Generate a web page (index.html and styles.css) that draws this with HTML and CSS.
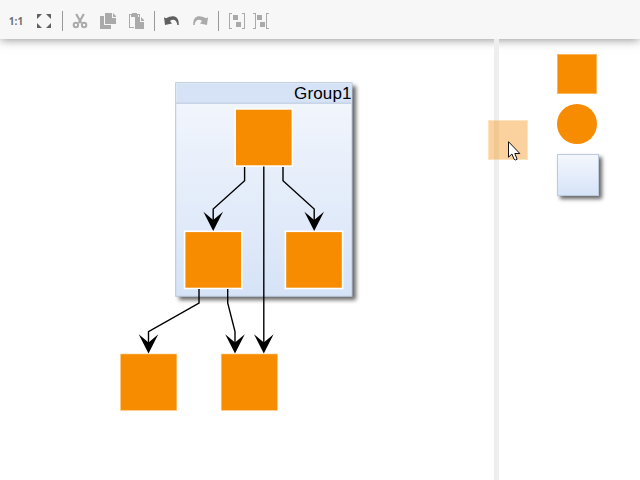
FILE: index.html
```html
<!DOCTYPE html>
<html lang="en">
<head>
<meta charset="utf-8">
<title>Graph Editor</title>
<link rel="stylesheet" href="styles.css">
</head>
<body>
<header class="toolbar">
  <span class="tool zoom-label">1:1</span>
  <svg class="tool dark" viewBox="0 0 16 16"><path d="M1 1h5L1 6zM10 1h5v5zM1 10l5 5H1zM15 10v5h-5z"/></svg>
  <span class="separator"></span>
  <svg class="tool" viewBox="0 0 16 16"><path d="M4.200 1l5 9M11.800 1L6.800 10" fill="none" stroke="#aaa" stroke-width="2.2"/><g fill="none" stroke="#aaa" stroke-width="2"><circle cx="3.900" cy="12" r="2.200"/><circle cx="12.100" cy="12" r="2.200"/></g></svg>
  <svg class="tool" viewBox="0 0 16 16"><path d="M0 3h4v9h7v4H0zM5 0h7v5h4v6H5zM13 0l3 3v1h-3z"/></svg>
  <svg class="tool" viewBox="0 0 16 16"><path d="M1 1h3V0h5v1h3v3h-1V2h-1v2H3V2H2v12h4v1H1zM7 4h5v5h4v7H7zM13 4l3 3v1h-3z"/></svg>
  <span class="separator"></span>
  <svg class="tool dark" viewBox="0 0 16 16"><path d="M0 4.300l2 1C6 3 10 2.500 12.500 4.500Q15 6.500 14.800 12L13.300 12Q13 7.500 9.500 6.800Q7.500 6.700 6 8l2 2.500L1 12z"/></svg>
  <svg class="tool" viewBox="0 0 16 16"><path d="M16 4.300l-2 1C10 3 6 2.500 3.500 4.500Q1 6.500 1.200 12L2.700 12Q3 7.500 6.500 6.800Q8.500 6.700 10 8l-2 2.500L15 12z"/></svg>
  <span class="separator"></span>
  <svg class="tool group-tool" viewBox="0 0 16 16"><path d="M0 0h3v1H1v14h2v1H0zM13 0h3v16h-3v-1h2V1h-2zM4 2h5v5H4zM7 9h5v5H7z"/></svg>
  <svg class="tool ungroup-tool" viewBox="0 0 16 16"><path d="M0 0h3v16H0v-1h2V1H0zM13 0h3v1h-2v14h2v1h-3zM4 2h5v5H4zM7 9h5v5H7z"/></svg>
</header>
<main class="workspace">
  <svg class="diagram" viewBox="0 39 494 441">
    <defs>
      <linearGradient id="body" x1="0" y1="0" x2="0" y2="1"><stop offset="0" stop-color="#f4f7fd"/><stop offset="1" stop-color="#d6e3f7"/></linearGradient>
      <filter id="shade" x="-10%" y="-10%" width="125%" height="125%"><feGaussianBlur stdDeviation="1.9"/></filter>
      <path id="arrow" d="M0 .5L-9.800 -18.800L0 -10.500L9.800 -18.800z"/>
    </defs>
    <rect x="179" y="86" width="177" height="214" fill="#000" opacity=".6" filter="url(#shade)"/>
    <rect x="175.700" y="82.700" width="176.300" height="213.600" fill="url(#body)" stroke="#b7c5da"/>
    <rect x="176.500" y="83.500" width="174.700" height="19.500" fill="#d6e3f7"/>
    <path d="M176 103.200h175.500" stroke="#b7c5da"/>
    <text class="group-title" x="351.500" y="99" text-anchor="end" textLength="57.500">Group1</text>
    <g class="nodes grouped">
      <rect x="235.200" y="108.900" width="57.200" height="57.200"/>
      <rect x="184.600" y="231.300" width="57.200" height="57.200"/>
      <rect x="285.400" y="231.300" width="57.200" height="57.200"/>
    </g>
    <g class="nodes">
      <rect x="120.500" y="354" width="56.300" height="56.300"/>
      <rect x="221.200" y="354" width="56.300" height="56.300"/>
    </g>
    <g class="edges">
      <path d="M244.600 167v13.800L213.200 209v12"/>
      <path d="M283 167v13.800L314.200 209v12"/>
      <path d="M263.800 166.500V344"/>
      <path d="M199 289v14L148.500 331.700V344"/>
      <path d="M227.700 289v14L235 331.700V344"/>
    </g>
    <use href="#arrow" x="213.200" y="230.500"/>
    <use href="#arrow" x="314.200" y="230.500"/>
    <use href="#arrow" x="148.500" y="353"/>
    <use href="#arrow" x="235" y="353"/>
    <use href="#arrow" x="263.800" y="353"/>
  </svg>
  <div class="divider"></div>
  <aside class="palette">
    <div class="shape"></div>
    <div class="shape round"></div>
    <div class="shape container"></div>
  </aside>
  <div class="drag-preview"></div>
  <svg class="cursor" viewBox="0 0 14 20"><path d="M.5.700v15.500l3.400-3.200 2.200 5.300 1.500.7 1.500-.8-2.300-5.700h5z" fill="#fff" stroke="#111"/></svg>
</main>
</body>
</html>
```
FILE: styles.css
```css
* { box-sizing: border-box; }
body {
  margin: 0;
  height: 480px;
  overflow: hidden;
  display: flex;
  flex-direction: column;
  background: #fff;
  font-family: "Liberation Sans", Arial, sans-serif;
}
.toolbar {
  flex: none;
  height: 39px;
  display: flex;
  align-items: center;
  padding: 3px 8px 0;
  gap: 12px;
  background: #f7f7f7;
  box-shadow: 0 0 10px rgba(0, 0, 0, .5);
}
.tool {
  flex: none;
  width: 16px;
  height: 16px;
  fill: #aaa;
}
.dark { fill: #606060; }
.zoom-label {
  font: bold 10px/16px "Open Sans", sans-serif;
  color: #707070;
  text-align: center;
}
.separator {
  flex: none;
  width: 1px;
  height: 20px;
  margin: 0 -3px 0 -2px;
  background: #999;
}
.group-tool { margin-left: 1px; }
.ungroup-tool { margin-left: -4px; }
.workspace {
  position: relative;
  flex: 1;
  display: flex;
}
.diagram {
  flex: none;
  width: 494px;
  height: 441px;
}
.group-title { font-size: 17px; fill: #000; }
.nodes { fill: #f78c00; stroke: #ffc880; stroke-width: .6; }
.grouped { stroke: #fff; stroke-width: 1.6; }
.edges { fill: none; stroke: #000; stroke-width: 1.4; }
.divider { flex: none; width: 5px; background: #eee; }
.palette {
  flex: 1;
  display: flex;
  flex-direction: column;
  align-items: flex-start;
  gap: 10px;
  padding: 15px 0 0 58px;
}
.shape {
  width: 40px;
  height: 40px;
  background: #f78c00;
  border: 1px solid #fbb65c;
}
.shape.round {
  border: 0;
  border-radius: 50%;
}
.shape.container {
  width: 42px;
  height: 42px;
  background: linear-gradient(#f4f7fd, #d6e3f7);
  border-color: #bccadd;
  box-shadow: 3px 3px 4px rgba(0, 0, 0, .6);
}
.drag-preview {
  position: absolute;
  left: 488px;
  top: 81px;
  width: 40px;
  height: 40px;
  background: #f78c00;
  border: 1px solid #fbb65c;
  opacity: .38;
}
.cursor {
  position: absolute;
  left: 508px;
  top: 102px;
  width: 14px;
  height: 20px;
}
```
